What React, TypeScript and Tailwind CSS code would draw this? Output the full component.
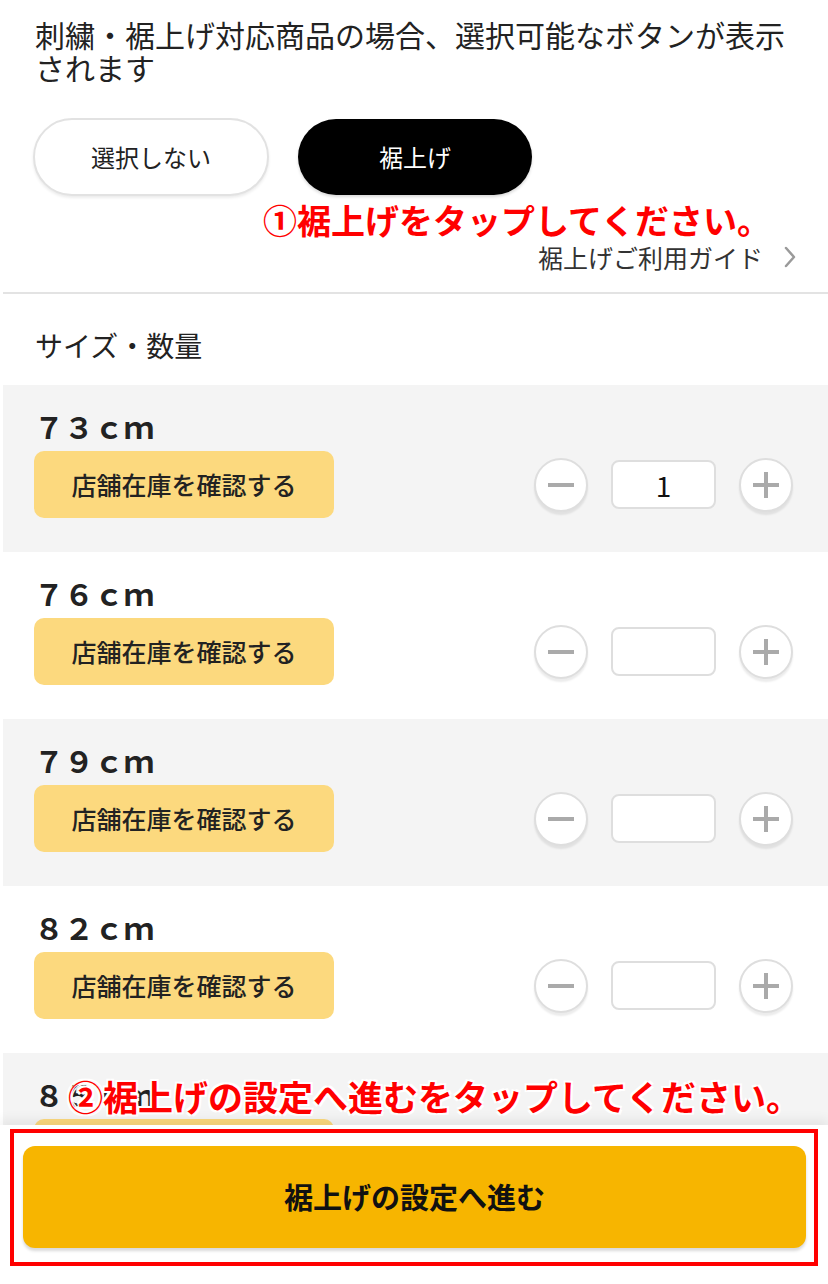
import React from "react";

const FONT = { fontFamily: '"Noto Sans CJK JP", "Noto Sans", sans-serif' };

function Stepper({ value }: { value?: string }) {
  return (
    <div className="flex items-center gap-[23px]">
      <div className="flex h-[54px] w-[54px] items-center justify-center rounded-full border-2 border-[#dedede] bg-white shadow-[0_3px_2px_rgba(0,0,0,0.08)]">
        <div className="h-[4px] w-[26px] bg-[#aaaaaa]" />
      </div>
      <div className="flex h-[49px] w-[105px] items-center justify-center rounded-[8px] border-2 border-[#dedede] bg-white text-[28px] leading-none text-[#111]">
        {value}
      </div>
      <div className="relative flex h-[54px] w-[54px] items-center justify-center rounded-full border-2 border-[#dedede] bg-white shadow-[0_3px_2px_rgba(0,0,0,0.08)]">
        <div className="absolute h-[4px] w-[26px] bg-[#aaaaaa]" />
        <div className="absolute h-[26px] w-[4px] bg-[#aaaaaa]" />
      </div>
    </div>
  );
}

function Row({ label, gray, value }: { label: string; gray: boolean; value?: string }) {
  return (
    <div className={`ml-[3px] h-[167px] pl-[31px] pr-[35px] pt-[23px] ${gray ? "bg-[#f4f4f4]" : "bg-white"}`}>
      <div className="text-[30px] font-bold leading-[36px] text-[#222]">{label}</div>
      <div className="mt-[7px] flex items-center justify-between">
        <div className="flex h-[67px] w-[300px] items-center justify-center rounded-[10px] bg-[#fcd97e] text-[25px] font-medium text-[#222]">
          店舗在庫を確認する
        </div>
        <Stepper value={value} />
      </div>
    </div>
  );
}

export default function App() {
  const rows = [
    { label: "７３ｃｍ", value: "1" },
    { label: "７６ｃｍ" },
    { label: "７９ｃｍ" },
    { label: "８２ｃｍ" },
    { label: "８５ｃｍ" },
  ];
  return (
    <div className="relative h-[1284px] w-[828px] overflow-hidden bg-white" style={FONT}>
      <div className="px-[35px] pt-[18px]">
        <p className="text-[30px] leading-[33px] text-[#222]">
          刺繍・裾上げ対応商品の場合、選択可能なボタンが表示されます
        </p>
        <div className="mt-[34px] flex items-center gap-[29px]">
          <div className="-ml-[2px] flex h-[78px] w-[236px] items-center justify-center rounded-full border-2 border-[#e2e2e2] bg-white text-[24px] text-[#222] shadow-[0_2px_3px_rgba(0,0,0,0.08)]">
            選択しない
          </div>
          <div className="flex h-[76px] w-[234px] items-center justify-center rounded-full bg-black text-[24px] text-white shadow-[0_2px_3px_rgba(0,0,0,0.15)]">
            裾上げ
          </div>
        </div>
      </div>
      <p className="mt-[6px] pl-[263px] text-[34px] font-bold leading-[36px] text-[#ff0000]">
        ①裾上げをタップしてください。
      </p>
      <div className="mt-[4px] flex items-center justify-end gap-[20px] pr-[31px]">
        <span className="text-[25px] leading-[30px] text-[#333]">裾上げご利用ガイド</span>
        <svg width="14" height="24" viewBox="0 0 14 24" fill="none">
          <path d="M3 3l8 9-8 9" stroke="#9a9a9a" strokeWidth="2.5" strokeLinecap="round" strokeLinejoin="round" />
        </svg>
      </div>
      <div className="ml-[3px] mt-[20px] h-[2px] bg-[#e3e3e3]" />
      <p className="mb-[22px] mt-[33px] pl-[35px] text-[28px] leading-[36px] text-[#222]">サイズ・数量</p>
      <div>
        {rows.map((r, i) => (
          <Row key={r.label} label={r.label} gray={i % 2 === 0} value={r.value} />
        ))}
      </div>

      <p className="absolute left-[68px] top-[1076px] text-[35px] font-bold leading-[40px] text-[#ff0000] [text-shadow:0_0_2px_#fff,0_0_3px_#fff,2px_2px_0_#fff,-2px_-2px_0_#fff,2px_-2px_0_#fff,-2px_2px_0_#fff]">
        ②裾上げの設定へ進むをタップしてください。
      </p>

      <div className="absolute bottom-0 left-0 right-0 h-[159px] bg-white pt-[4px] shadow-[0_-6px_10px_rgba(0,0,0,0.06)]">
        <div className="mx-[10px] h-[137px] border-4 border-[#ff0000] px-[9px] pt-[13px]">
          <div className="flex h-[102px] w-[783px] items-center justify-center rounded-[12px] bg-[#f7b500] text-[29px] font-bold text-[#111] shadow-[0_3px_3px_rgba(0,0,0,0.15)]">
            裾上げの設定へ進む
          </div>
        </div>
      </div>
    </div>
  );
}
